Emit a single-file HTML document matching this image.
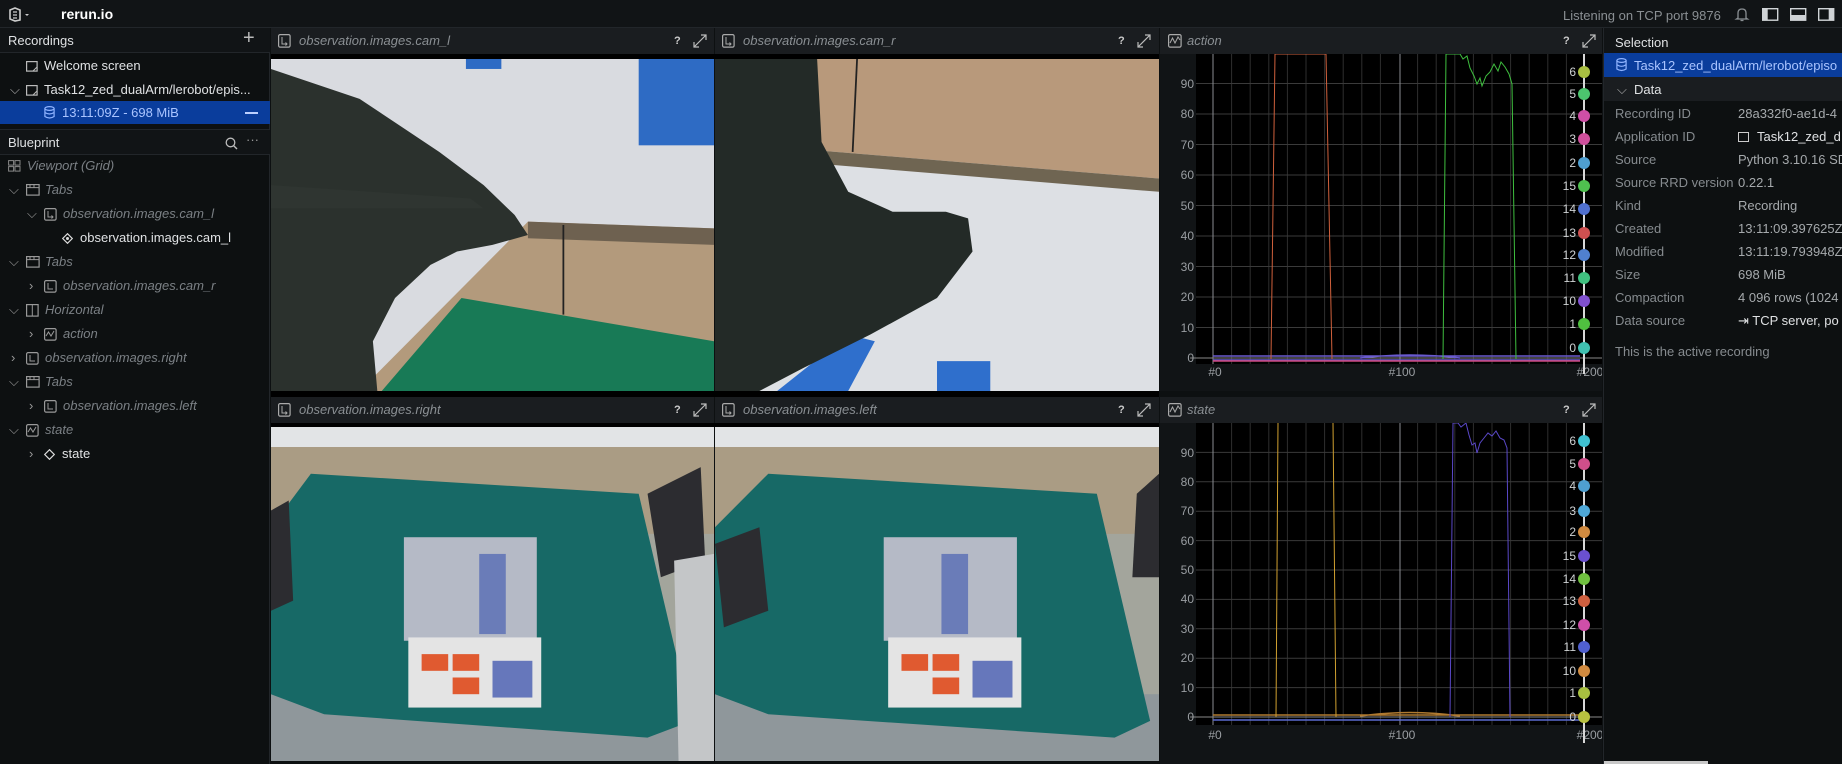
<!DOCTYPE html>
<html><head><meta charset="utf-8">
<style>
*{margin:0;padding:0;box-sizing:border-box}
body{width:1842px;height:764px;background:#0d1011;font-family:"Liberation Sans",sans-serif;font-size:13px;color:#cfd2d4;position:relative;overflow:hidden}
.a{position:absolute}
.top{left:0;top:0;width:1842px;height:28px;background:#111416;border-bottom:1px solid #22262a}
.side{left:0;top:28px;width:270px;height:736px;background:#0d1011;border-right:1px solid #22262a}
.row{position:absolute;left:0;width:270px;height:24px;line-height:24px;white-space:nowrap}
.it{font-style:italic;color:#7b8085}
.wh{color:#dfe1e3}
.ph{background:#1a1d20;height:26px;line-height:26px;}
.ph span{position:absolute;font-style:italic;color:#8a8f93}
.sel .k{position:absolute;left:1615px;color:#868b8f}
.sel .v{position:absolute;left:1738px;color:#a5a9ac;white-space:nowrap}
svg{position:absolute;overflow:hidden}
</style></head><body>

<!-- top bar -->
<div class="a top">
  <svg style="left:8px;top:7px" width="24" height="15" viewBox="0 0 24 15"><path d="M2 3 L7 1 L12 3 L12 13 L7 14 L2 12Z" fill="none" stroke="#ccc" stroke-width="1.6"/><path d="M5 5 L9 5 M5 8 L9 8 M5 11 L9 11" stroke="#ccc" stroke-width="1.2"/><path d="M17 7 L21 7 L19 9Z" fill="#ccc"/></svg>
  <div class="a" style="left:61px;top:6px;font-weight:bold;color:#fff;font-size:14px">rerun.io</div>
  <div class="a" style="left:1563px;top:8px;color:#8a8f93;font-size:13px">Listening on TCP port 9876</div>
  <svg style="left:1734px;top:7px" width="16" height="15" viewBox="0 0 16 15"><path d="M4 11 L4 6 Q4 2 8 2 Q12 2 12 6 L12 11 L13.5 12 L2.5 12Z M6.5 13.5 L9.5 13.5" fill="none" stroke="#8a8f93" stroke-width="1.3"/></svg>
  <svg style="left:1762px;top:8px" width="74" height="13" viewBox="0 0 74 13"><rect x="0.7" y="0.7" width="15" height="11.5" fill="none" stroke="#cfd3d6" stroke-width="1.4"/><rect x="0.7" y="0.7" width="5" height="11.5" fill="#cfd3d6"/><rect x="28.7" y="0.7" width="15" height="11.5" fill="none" stroke="#cfd3d6" stroke-width="1.4"/><rect x="28.7" y="7" width="15" height="5.2" fill="#cfd3d6"/><rect x="56.7" y="0.7" width="15" height="11.5" fill="none" stroke="#cfd3d6" stroke-width="1.4"/><rect x="66.7" y="0.7" width="5" height="11.5" fill="#cfd3d6"/></svg>
</div>

<!-- sidebar -->
<div class="a side">
  <div class="row" style="top:0;height:25px;line-height:25px;background:#111416;border-bottom:1px solid #22262a"><span class="a wh" style="left:8px">Recordings</span><span class="a" style="left:243px;top:-2px;font-size:20px;color:#bbb">+</span></div>
  <div class="row" style="top:26px"><svg style="left:26px;top:7px" width="12" height="11"><rect x=".6" y=".6" width="10.5" height="9.5" fill="none" stroke="#bbb" stroke-width="1.2"/><path d="M7 10 L11 6" stroke="#bbb"/></svg><span class="a wh" style="left:44px">Welcome screen</span></div>
  <div class="row" style="top:50px"><span class="a" style="left:10px;color:#aaa">⌵</span><svg style="left:26px;top:7px" width="12" height="11"><rect x=".6" y=".6" width="10.5" height="9.5" fill="none" stroke="#bbb" stroke-width="1.2"/><path d="M7 10 L11 6" stroke="#bbb"/></svg><span class="a wh" style="left:44px">Task12_zed_dualArm/lerobot/epis...</span></div>
  <div class="row" style="top:73px;height:23px;line-height:23px;background:#0a3d9c"><svg style="left:44px;top:5px" width="11" height="13"><ellipse cx="5.5" cy="2.5" rx="4.6" ry="1.9" fill="none" stroke="#8fb3ff" stroke-width="1.2"/><path d="M.9 2.5 V10.5 Q5.5 13.5 10.1 10.5 V2.5 M.9 6.5 Q5.5 9.5 10.1 6.5" fill="none" stroke="#8fb3ff" stroke-width="1.2"/></svg><span class="a" style="left:62px;color:#a9c4ff">13:11:09Z - 698 MiB</span><span class="a" style="left:245px;top:11px;width:13px;height:2px;background:#bcd0ff"></span></div>
  <div class="row" style="top:101px;height:26px;line-height:26px;border-top:1px solid #22262a;border-bottom:1px solid #22262a;background:#111416"><span class="a wh" style="left:8px">Blueprint</span><svg style="left:225px;top:7px" width="13" height="13"><circle cx="5.5" cy="5.5" r="4.3" fill="none" stroke="#bbb" stroke-width="1.3"/><path d="M8.6 8.6 L12 12" stroke="#bbb" stroke-width="1.4"/></svg><span class="a" style="left:246px;top:-3px;color:#999">···</span></div>
  <!-- tree -->
  <div class="row" style="top:126px"><svg style="left:8px;top:6px" width="13" height="12"><rect x=".6" y=".6" width="5" height="4.5" fill="none" stroke="#888"/><rect x="7" y=".6" width="5" height="4.5" fill="none" stroke="#888"/><rect x=".6" y="6.6" width="5" height="4.5" fill="none" stroke="#888"/><rect x="7" y="6.6" width="5" height="4.5" fill="none" stroke="#888"/></svg><span class="a it" style="left:27px">Viewport (Grid)</span></div>
  <div class="row" style="top:150px"><span class="a" style="left:9px;color:#999">⌵</span><svg style="left:26px;top:6px" width="14" height="12"><rect x=".6" y=".6" width="12.5" height="10.5" fill="none" stroke="#999" stroke-width="1.2"/><path d="M.6 3.6 H13 M4 .6 V3.6 M8 .6 V3.6" stroke="#999"/></svg><span class="a it" style="left:45px">Tabs</span></div>
  <div class="row" style="top:174px"><span class="a" style="left:27px;color:#999">⌵</span><svg style="left:44px;top:6px" width="13" height="13"><rect x=".6" y=".6" width="11.5" height="11.5" rx="1.5" fill="none" stroke="#999" stroke-width="1.2"/><path d="M4 3 V9 H9 M7.5 7.5 L9 9 L7.5 10.5" fill="none" stroke="#999"/></svg><span class="a it" style="left:63px">observation.images.cam_l</span></div>
  <div class="row" style="top:198px"><svg style="left:62px;top:7px" width="11" height="11"><path d="M5.5 .7 L10.3 5.5 L5.5 10.3 L.7 5.5Z" fill="none" stroke="#ddd" stroke-width="1.2"/><circle cx="5.5" cy="5.5" r="1.5" fill="#ddd"/></svg><span class="a wh" style="left:80px">observation.images.cam_l</span></div>
  <div class="row" style="top:222px"><span class="a" style="left:9px;color:#999">⌵</span><svg style="left:26px;top:6px" width="14" height="12"><rect x=".6" y=".6" width="12.5" height="10.5" fill="none" stroke="#999" stroke-width="1.2"/><path d="M.6 3.6 H13 M4 .6 V3.6 M8 .6 V3.6" stroke="#999"/></svg><span class="a it" style="left:45px">Tabs</span></div>
  <div class="row" style="top:246px"><span class="a" style="left:29px;color:#999">›</span><svg style="left:44px;top:6px" width="13" height="13"><rect x=".6" y=".6" width="11.5" height="11.5" rx="1.5" fill="none" stroke="#999" stroke-width="1.2"/><path d="M4 3 V9 H9" fill="none" stroke="#999"/></svg><span class="a it" style="left:63px">observation.images.cam_r</span></div>
  <div class="row" style="top:270px"><span class="a" style="left:9px;color:#999">⌵</span><svg style="left:26px;top:6px" width="13" height="13"><rect x=".6" y=".6" width="11.5" height="11.5" fill="none" stroke="#999" stroke-width="1.2"/><path d="M6.3 .6 V12" stroke="#999"/></svg><span class="a it" style="left:45px">Horizontal</span></div>
  <div class="row" style="top:294px"><span class="a" style="left:29px;color:#999">›</span><svg style="left:44px;top:6px" width="13" height="13"><rect x=".6" y=".6" width="11.5" height="11.5" rx="1.5" fill="none" stroke="#999" stroke-width="1.2"/><path d="M2 8 L4.5 4 L7 8 L10 3" fill="none" stroke="#999"/></svg><span class="a it" style="left:63px">action</span></div>
  <div class="row" style="top:318px"><span class="a" style="left:11px;color:#999">›</span><svg style="left:26px;top:6px" width="13" height="13"><rect x=".6" y=".6" width="11.5" height="11.5" rx="1.5" fill="none" stroke="#999" stroke-width="1.2"/><path d="M4 3 V9 H9" fill="none" stroke="#999"/></svg><span class="a it" style="left:45px">observation.images.right</span></div>
  <div class="row" style="top:342px"><span class="a" style="left:9px;color:#999">⌵</span><svg style="left:26px;top:6px" width="14" height="12"><rect x=".6" y=".6" width="12.5" height="10.5" fill="none" stroke="#999" stroke-width="1.2"/><path d="M.6 3.6 H13 M4 .6 V3.6 M8 .6 V3.6" stroke="#999"/></svg><span class="a it" style="left:45px">Tabs</span></div>
  <div class="row" style="top:366px"><span class="a" style="left:29px;color:#999">›</span><svg style="left:44px;top:6px" width="13" height="13"><rect x=".6" y=".6" width="11.5" height="11.5" rx="1.5" fill="none" stroke="#999" stroke-width="1.2"/><path d="M4 3 V9 H9" fill="none" stroke="#999"/></svg><span class="a it" style="left:63px">observation.images.left</span></div>
  <div class="row" style="top:390px"><span class="a" style="left:9px;color:#999">⌵</span><svg style="left:26px;top:6px" width="13" height="13"><rect x=".6" y=".6" width="11.5" height="11.5" rx="1.5" fill="none" stroke="#999" stroke-width="1.2"/><path d="M2 8 L4.5 4 L7 8 L10 3" fill="none" stroke="#999"/></svg><span class="a it" style="left:45px">state</span></div>
  <div class="row" style="top:414px"><span class="a" style="left:29px;color:#999">›</span><svg style="left:44px;top:7px" width="11" height="11"><path d="M5.5 .7 L10.3 5.5 L5.5 10.3 L.7 5.5Z" fill="none" stroke="#ddd" stroke-width="1.2"/></svg><span class="a wh" style="left:62px">state</span></div>
</div>

<!-- panel headers -->
<div class="a ph" style="left:271px;top:28px;width:443px"><svg style="left:7px;top:6px" width="13" height="14"><rect x=".6" y=".6" width="11.5" height="12.5" rx="1.5" fill="none" stroke="#aaa" stroke-width="1.2"/><path d="M4 3 V10 H9 M7.5 8.5 L9 10 L7.5 11.5" fill="none" stroke="#aaa"/></svg><span style="left:28px">observation.images.cam_l</span><b class="a" style="left:403px;color:#ccc;font-size:11px">?</b><svg style="left:422px;top:6px" width="14" height="14"><path d="M1 13 L13 1 M1 8 V13 H6 M8 1 H13 V6" fill="none" stroke="#bbb" stroke-width="1.2"/></svg></div>
<div class="a ph" style="left:715px;top:28px;width:444px"><svg style="left:7px;top:6px" width="13" height="14"><rect x=".6" y=".6" width="11.5" height="12.5" rx="1.5" fill="none" stroke="#aaa" stroke-width="1.2"/><path d="M4 3 V10 H9 M7.5 8.5 L9 10 L7.5 11.5" fill="none" stroke="#aaa"/></svg><span style="left:28px">observation.images.cam_r</span><b class="a" style="left:403px;color:#ccc;font-size:11px">?</b><svg style="left:422px;top:6px" width="14" height="14"><path d="M1 13 L13 1 M1 8 V13 H6 M8 1 H13 V6" fill="none" stroke="#bbb" stroke-width="1.2"/></svg></div>
<div class="a ph" style="left:1160px;top:28px;width:442px"><svg style="left:8px;top:6px" width="14" height="14"><rect x=".6" y=".6" width="12.5" height="12.5" rx="1.5" fill="none" stroke="#aaa" stroke-width="1.2"/><path d="M2 9 L4.5 4 L7 9 L10 3 L12 6" fill="none" stroke="#aaa"/></svg><span style="left:27px">action</span><b class="a" style="left:403px;color:#ccc;font-size:11px">?</b><svg style="left:422px;top:6px" width="14" height="14"><path d="M1 13 L13 1 M1 8 V13 H6 M8 1 H13 V6" fill="none" stroke="#bbb" stroke-width="1.2"/></svg></div>
<div class="a ph" style="left:271px;top:397px;width:443px"><svg style="left:7px;top:6px" width="13" height="14"><rect x=".6" y=".6" width="11.5" height="12.5" rx="1.5" fill="none" stroke="#aaa" stroke-width="1.2"/><path d="M4 3 V10 H9 M7.5 8.5 L9 10 L7.5 11.5" fill="none" stroke="#aaa"/></svg><span style="left:28px">observation.images.right</span><b class="a" style="left:403px;color:#ccc;font-size:11px">?</b><svg style="left:422px;top:6px" width="14" height="14"><path d="M1 13 L13 1 M1 8 V13 H6 M8 1 H13 V6" fill="none" stroke="#bbb" stroke-width="1.2"/></svg></div>
<div class="a ph" style="left:715px;top:397px;width:444px"><svg style="left:7px;top:6px" width="13" height="14"><rect x=".6" y=".6" width="11.5" height="12.5" rx="1.5" fill="none" stroke="#aaa" stroke-width="1.2"/><path d="M4 3 V10 H9 M7.5 8.5 L9 10 L7.5 11.5" fill="none" stroke="#aaa"/></svg><span style="left:28px">observation.images.left</span><b class="a" style="left:403px;color:#ccc;font-size:11px">?</b><svg style="left:422px;top:6px" width="14" height="14"><path d="M1 13 L13 1 M1 8 V13 H6 M8 1 H13 V6" fill="none" stroke="#bbb" stroke-width="1.2"/></svg></div>
<div class="a ph" style="left:1160px;top:397px;width:442px"><svg style="left:8px;top:6px" width="14" height="14"><rect x=".6" y=".6" width="12.5" height="12.5" rx="1.5" fill="none" stroke="#aaa" stroke-width="1.2"/><path d="M2 9 L4.5 4 L7 9 L10 3 L12 6" fill="none" stroke="#aaa"/></svg><span style="left:27px">state</span><b class="a" style="left:403px;color:#ccc;font-size:11px">?</b><svg style="left:422px;top:6px" width="14" height="14"><path d="M1 13 L13 1 M1 8 V13 H6 M8 1 H13 V6" fill="none" stroke="#bbb" stroke-width="1.2"/></svg></div>
<div class="a" style="left:271px;top:54px;width:888px;height:5px;background:#000"></div>
<div class="a" style="left:271px;top:391px;width:888px;height:6px;background:#000"></div>
<div class="a" style="left:271px;top:423px;width:888px;height:4px;background:#000"></div>

<!-- cam_l -->
<svg style="left:271px;top:59px" width="443" height="332" viewBox="0 0 100 100" preserveAspectRatio="none">
<rect width="100" height="100" fill="#d9dbe0"/>
<rect x="83" y="0" width="17" height="26" fill="#2e6bc4"/>
<rect x="44" y="0" width="8" height="3" fill="#2e6bc4"/>
<polygon points="58,49 100,51 100,100 20,100" fill="#b39a7c"/>
<polygon points="58,49 100,51 100,56 58,54" fill="#6e6150"/>
<line x1="66" y1="50" x2="66" y2="77" stroke="#222" stroke-width=".4"/>
<polygon points="43,72 100,85 100,100 25,100" fill="#187a56"/>
<polygon points="0,3 20,12 38,28 48,38 55,47 58,53 50,56 42,58 36,62 28,72 23,85 24,100 0,100" fill="#2b312d"/>
<polygon points="0,38 45,42 48,45 0,45" fill="#323833" opacity=".6"/>
</svg>
<!-- cam_r -->
<svg style="left:715px;top:59px" width="444" height="332" viewBox="0 0 100 100" preserveAspectRatio="none">
<rect width="100" height="100" fill="#dde0e4"/>
<polygon points="0,0 100,0 100,36 0,25" fill="#b8997b"/>
<polygon points="0,25 100,36 100,40 0,29" fill="#6f6552"/>
<line x1="32" y1="0" x2="31" y2="28" stroke="#222" stroke-width=".4"/>
<polygon points="14,100 30,83 36,85 30,100" fill="#2f6fcc"/>
<polygon points="50,91 62,91 62,100 50,100" fill="#2f6fcc"/>
<polygon points="0,0 23,0 24,25 30,40 40,46 52,46 57,48 58,58 50,72 35,83 20,93 10,100 0,100" fill="#232a27"/>
</svg>
<!-- right -->
<svg style="left:271px;top:427px" width="443" height="334" viewBox="0 0 100 100" preserveAspectRatio="none">
<rect width="100" height="100" fill="#a3a59c"/>
<rect width="100" height="6" fill="#e2e4e6"/>
<rect y="6" width="100" height="26" fill="#aa9c84"/>
<rect y="80" width="100" height="20" fill="#8f979b"/>
<polygon points="9,14 83,20 95,88 85,93 12,86 0,80 0,30" fill="#176966"/>
<rect x="30" y="33" width="30" height="31" fill="#b5bac6"/>
<rect x="47" y="38" width="6" height="24" fill="#6a7cb8"/>
<rect x="31" y="63" width="30" height="21" fill="#e4e4e4"/>
<rect x="34" y="68" width="6" height="5" fill="#e05a30"/><rect x="41" y="68" width="6" height="5" fill="#e05a30"/><rect x="41" y="75" width="6" height="5" fill="#e05a30"/>
<rect x="50" y="70" width="9" height="11" fill="#6677bb"/>
<polygon points="85,20 97,12 98,40 88,45" fill="#2c2c30"/>
<polygon points="0,25 4,22 5,52 0,55" fill="#2c2c30"/>
<polygon points="91,40 100,38 100,100 92,100" fill="#c4c6c8"/>
</svg>
<!-- left -->
<svg style="left:715px;top:427px" width="444" height="334" viewBox="0 0 100 100" preserveAspectRatio="none">
<rect width="100" height="100" fill="#a3a59c"/>
<rect width="100" height="6" fill="#e2e4e6"/>
<rect y="6" width="100" height="26" fill="#aa9c84"/>
<rect y="80" width="100" height="20" fill="#8f979b"/>
<polygon points="12,14 86,20 98,88 90,93 12,86 0,80 0,30" fill="#176966"/>
<rect x="38" y="33" width="30" height="31" fill="#b5bac6"/>
<rect x="51" y="38" width="6" height="24" fill="#6a7cb8"/>
<rect x="39" y="63" width="30" height="21" fill="#e4e4e4"/>
<rect x="42" y="68" width="6" height="5" fill="#e05a30"/><rect x="49" y="68" width="6" height="5" fill="#e05a30"/><rect x="49" y="75" width="6" height="5" fill="#e05a30"/>
<rect x="58" y="70" width="9" height="11" fill="#6677bb"/>
<polygon points="95,20 100,14 100,45 94,45" fill="#2c2c30"/>
<polygon points="0,35 10,30 12,55 2,60" fill="#2c2c30"/>
</svg>

<!-- action plot -->
<svg style="left:1160px;top:54px" width="442" height="337" viewBox="0 0 442 337">
<rect width="442" height="337" fill="#111416"/>
<rect x="36" y="0" width="406" height="310" fill="#000"/>
<g stroke="#2e2e2e" stroke-width="1">
<path d="M71.6 0V310M90.2 0V310M108.8 0V310M127.4 0V310M146 0V310M164.6 0V310M183.2 0V310M201.8 0V310M220.4 0V310M257.6 0V310M276.2 0V310M294.8 0V310M313.4 0V310M332 0V310M350.6 0V310M369.2 0V310M387.8 0V310M406.4 0V310"/>
<path d="M36 273.5H442M36 243H442M36 212.5H442M36 182H442M36 151.5H442M36 121H442M36 90.5H442M36 60H442M36 29.5H442" stroke="#3a3a3a"/>
</g>
<path d="M53 0V310M240 0V310" stroke="#8a8d92" stroke-width="1"/>
<path d="M30 304H442" stroke="#888"/>
<g font-size="12" fill="#9a9ea2" text-anchor="end">
<text x="34" y="308">0</text><text x="34" y="278">10</text><text x="34" y="247">20</text><text x="34" y="217">30</text><text x="34" y="186">40</text><text x="34" y="156">50</text><text x="34" y="125">60</text><text x="34" y="95">70</text><text x="34" y="64">80</text><text x="34" y="34">90</text>
</g>
<g font-size="12" fill="#9a9ea2" text-anchor="middle"><text x="55" y="322">#0</text><text x="242" y="322">#100</text><text x="430" y="322">#200</text></g>
<path d="M53 302 H420 M53 306 H420 M200 304 Q250 298 300 304" stroke="#6a5bd0" stroke-width="1.5" fill="none"/>
<path d="M53 307 H420" stroke="#d04a80" stroke-width="1.5"/>
<path d="M111 305 L115 0 L166 0 L172 305" stroke="#d0603c" fill="none" stroke-width="1"/>
<path d="M283 305 L286 0 L300 0 L303 5 L307 2 L310 14 L314 22 L317 30 L320 24 L322 32 L326 22 L330 18 L334 10 L338 17 L341 8 L345 13 L349 20 L352 30 L356 305" stroke="#3fbf3f" fill="none" stroke-width="1"/>
<line x1="424" y1="0" x2="424" y2="320" stroke="#d8d8d8" stroke-width="2"/>
<g font-size="12" fill="#cfd2d4" text-anchor="end">
<text x="416" y="22">6</text><text x="416" y="44">5</text><text x="416" y="66">4</text><text x="416" y="89">3</text><text x="416" y="113">2</text><text x="416" y="136">15</text><text x="416" y="159">14</text><text x="416" y="183">13</text><text x="416" y="205">12</text><text x="416" y="228">11</text><text x="416" y="251">10</text><text x="416" y="274">1</text><text x="416" y="298">0</text>
</g>
<g><circle cx="424" cy="18" r="6" fill="#a9bf42"/><circle cx="424" cy="40" r="6" fill="#4cc56e"/><circle cx="424" cy="62" r="6" fill="#cf4fa6"/><circle cx="424" cy="85" r="6" fill="#cf4f9c"/><circle cx="424" cy="109" r="6" fill="#4f9fd0"/><circle cx="424" cy="132" r="6" fill="#4fc04f"/><circle cx="424" cy="155" r="6" fill="#5070cf"/><circle cx="424" cy="179" r="6" fill="#cf5050"/><circle cx="424" cy="201" r="6" fill="#5080cf"/><circle cx="424" cy="224" r="6" fill="#40c080"/><circle cx="424" cy="247" r="6" fill="#8050cf"/><circle cx="424" cy="270" r="6" fill="#50c040"/><circle cx="424" cy="294" r="6" fill="#40c0b0"/></g>
</svg>

<!-- state plot -->
<svg style="left:1160px;top:423px" width="442" height="341" viewBox="0 0 442 341">
<rect width="442" height="341" fill="#111416"/>
<rect x="36" y="0" width="406" height="302" fill="#000"/>
<g stroke="#2e2e2e" stroke-width="1">
<path d="M71.6 0V302M90.2 0V302M108.8 0V302M127.4 0V302M146 0V302M164.6 0V302M183.2 0V302M201.8 0V302M220.4 0V302M257.6 0V302M276.2 0V302M294.8 0V302M313.4 0V302M332 0V302M350.6 0V302M369.2 0V302M387.8 0V302M406.4 0V302"/>
<path d="M36 264.6H442M36 235.2H442M36 205.8H442M36 176.4H442M36 147H442M36 117.6H442M36 88.2H442M36 58.8H442M36 29.4H442" stroke="#3a3a3a"/>
</g>
<path d="M53 0V302M240 0V302" stroke="#8a8d92"/>
<path d="M30 294H442" stroke="#888"/>
<g font-size="12" fill="#9a9ea2" text-anchor="end">
<text x="34" y="298">0</text><text x="34" y="269">10</text><text x="34" y="239">20</text><text x="34" y="210">30</text><text x="34" y="180">40</text><text x="34" y="151">50</text><text x="34" y="122">60</text><text x="34" y="92">70</text><text x="34" y="63">80</text><text x="34" y="34">90</text>
</g>
<g font-size="12" fill="#9a9ea2" text-anchor="middle"><text x="55" y="316">#0</text><text x="242" y="316">#100</text><text x="430" y="316">#200</text></g>
<path d="M53 292 H420 M200 293 Q250 286 300 293" stroke="#b07a30" stroke-width="1.5" fill="none"/>
<path d="M53 297 H420" stroke="#5a6ad0" stroke-width="1.5"/>
<path d="M116 294 L118 0 M173 0 L176 294" stroke="#d0a030" fill="none"/>
<path d="M290 294 L293 0 L298 0 L301 4 L306 0 L309 12 L312 22 L315 20 L317 30 L320 20 L324 15 L328 10 L332 13 L336 8 L340 15 L344 17 L347 25 L350 294" stroke="#5a48c8" fill="none"/>
<line x1="424" y1="0" x2="424" y2="320" stroke="#d8d8d8" stroke-width="2"/>
<g font-size="12" fill="#cfd2d4" text-anchor="end">
<text x="416" y="22">6</text><text x="416" y="45">5</text><text x="416" y="67">4</text><text x="416" y="92">3</text><text x="416" y="113">2</text><text x="416" y="137">15</text><text x="416" y="160">14</text><text x="416" y="182">13</text><text x="416" y="206">12</text><text x="416" y="228">11</text><text x="416" y="252">10</text><text x="416" y="274">1</text><text x="416" y="298">0</text>
</g>
<g><circle cx="424" cy="18" r="6" fill="#40c0d0"/><circle cx="424" cy="41" r="6" fill="#cf4f8a"/><circle cx="424" cy="63" r="6" fill="#4f9fd0"/><circle cx="424" cy="88" r="6" fill="#4fa8d8"/><circle cx="424" cy="109" r="6" fill="#d08a40"/><circle cx="424" cy="133" r="6" fill="#6a50cf"/><circle cx="424" cy="156" r="6" fill="#70c040"/><circle cx="424" cy="178" r="6" fill="#cf6040"/><circle cx="424" cy="202" r="6" fill="#cf4fa8"/><circle cx="424" cy="224" r="6" fill="#5060cf"/><circle cx="424" cy="248" r="6" fill="#d08a40"/><circle cx="424" cy="270" r="6" fill="#a8c040"/><circle cx="424" cy="294" r="6" fill="#b8c040"/></g>
</svg>

<!-- selection panel -->
<div class="a sel" style="left:1603px;top:28px;width:239px;height:736px;background:#0d1011;border-left:1px solid #22262a">
</div>
<div class="a" style="left:1604px;top:28px;width:238px;height:25px;background:#111416"></div>
<div class="a wh" style="left:1615px;top:35px">Selection</div>
<div class="a" style="left:1604px;top:53px;width:238px;height:24px;background:#0a3d9c"></div>
<svg style="left:1616px;top:58px" width="11" height="14"><ellipse cx="5.5" cy="2.5" rx="4.6" ry="1.9" fill="none" stroke="#8fb3ff" stroke-width="1.2"/><path d="M.9 2.5 V11 Q5.5 14 10.1 11 V2.5 M.9 6.8 Q5.5 9.8 10.1 6.8" fill="none" stroke="#8fb3ff" stroke-width="1.2"/></svg>
<div class="a" style="left:1634px;top:58px;color:#a9c4ff;white-space:nowrap">Task12_zed_dualArm/lerobot/episo</div>
<div class="a" style="left:1604px;top:77px;width:238px;height:24px;background:#1a1d20"></div>
<div class="a" style="left:1617px;top:82px;color:#aaa">⌵</div>
<div class="a wh" style="left:1634px;top:82px">Data</div>
<div class="sel">
<div class="k" style="top:106px">Recording ID</div><div class="v" style="top:106px">28a332f0-ae1d-4</div>
<div class="k" style="top:129px">Application ID</div><div class="v" style="top:129px;color:#dfe1e3"><span style="display:inline-block;width:11px;height:10px;border:1.2px solid #ccc;margin-right:8px;vertical-align:-1px"></span>Task12_zed_d</div>
<div class="k" style="top:152px">Source</div><div class="v" style="top:152px">Python 3.10.16 SD</div>
<div class="k" style="top:175px">Source RRD version</div><div class="v" style="top:175px">0.22.1</div>
<div class="k" style="top:198px">Kind</div><div class="v" style="top:198px">Recording</div>
<div class="k" style="top:221px">Created</div><div class="v" style="top:221px">13:11:09.397625Z</div>
<div class="k" style="top:244px">Modified</div><div class="v" style="top:244px">13:11:19.793948Z</div>
<div class="k" style="top:267px">Size</div><div class="v" style="top:267px">698 MiB</div>
<div class="k" style="top:290px">Compaction</div><div class="v" style="top:290px">4 096 rows (1024</div>
<div class="k" style="top:313px">Data source</div><div class="v" style="top:313px;color:#dfe1e3">⇥ TCP server, po</div>
<div class="k" style="top:344px">This is the active recording</div>
</div>
<div class="a" style="left:1604px;top:761px;width:104px;height:3px;background:#c8c8c8"></div>
</body></html>
